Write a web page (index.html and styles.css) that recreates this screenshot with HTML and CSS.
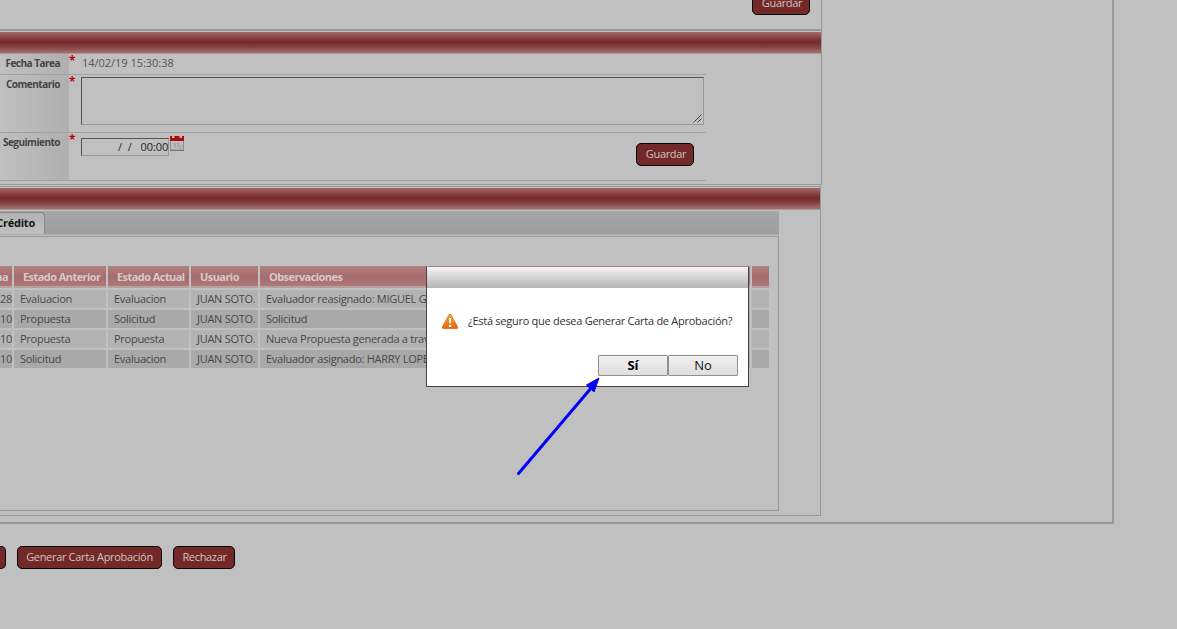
FILE: index.html
```html
<!DOCTYPE html>
<html lang="es">
<head>
<meta charset="utf-8">
<title>Generar Carta</title>
<link rel="stylesheet" href="styles.css">
</head>
<body>
<main class="frame">
  <section class="panel panel-top"><button class="btn btn-save">Guardar</button></section>
  <section class="panel panel-task">
    <div class="bar"></div>
    <div class="form">
      <div class="row row-date"><label>Fecha Tarea</label><i class="req">*</i><span class="value">14/02/19 15:30:38</span></div>
      <div class="row row-comment"><label>Comentario</label><i class="req">*</i>
        <div class="textarea"><svg width="9" height="9" viewBox="0 0 9 9"><path d="M0.5 8.5L8.5 .5M4.5 8.5L8.5 4.5" stroke="#444" fill="none"/></svg></div></div>
      <div class="row row-follow"><label>Seguimiento</label><i class="req">*</i>
        <div class="datebox"><span>/</span><span class="s2">/</span><span class="time">00:00</span></div>
        <svg class="cal" width="14" height="16" viewBox="0 0 14 16"><path d="M.5 5h13v10H.5z" fill="#bdbdbd" stroke="#909090"/><path d="M0 1h14v5H0z" fill="#a50f12"/><path d="M2 0h2.500v3H2zM9.500 0H12v3H9.500z" fill="#cbb49e"/><path d="M4 8.500L5 8v4.500M6.500 8.300H9L7.500 12.500" fill="none" stroke="#8a8a8a" stroke-width=".8"/><path d="M10 14v-3h3" fill="none" stroke="#999"/><path d="M0 15.500h14" stroke="#777"/></svg>
        <button class="btn btn-save">Guardar</button></div>
    </div>
  </section>
  <section class="panel panel-history">
    <div class="bar"></div>
    <div class="tabs"><div class="tab"><span>Crédito</span></div></div>
    <div class="content">
      <div class="grid head"><div>ha</div><div>Estado Anterior</div><div>Estado Actual</div><div>Usuario</div><div>Observaciones</div><div></div></div>
      <div class="grid"><div>28</div><div>Evaluacion</div><div>Evaluacion</div><div>JUAN SOTO.</div><div>Evaluador reasignado: MIGUEL G</div><div></div></div>
      <div class="grid alt"><div>10</div><div>Propuesta</div><div>Solicitud</div><div>JUAN SOTO.</div><div>Solicitud</div><div></div></div>
      <div class="grid"><div>10</div><div>Propuesta</div><div>Propuesta</div><div>JUAN SOTO.</div><div>Nueva Propuesta generada a trav</div><div></div></div>
      <div class="grid alt"><div>10</div><div>Solicitud</div><div>Evaluacion</div><div>JUAN SOTO.</div><div>Evaluador asignado: HARRY LOPE</div><div></div></div>
    </div>
  </section>
</main>
<footer class="actions"><button class="btn stub"></button><button class="btn generate">Generar Carta Aprobación</button><button class="btn reject">Rechazar</button></footer>
<div class="dialog">
  <div class="dialog-title"></div>
  <div class="message"><svg width="16" height="15" viewBox="0 0 16 15"><defs><linearGradient id="warn" x2="0" y2="1"><stop stop-color="#ffa63f"/><stop offset="1" stop-color="#e06810"/></linearGradient></defs><path d="M7 .8Q8 -.4 9 .8L15.600 13Q16 14.500 15 14.500H1Q0 14.500 .4 13Z" fill="url(#warn)" stroke="#d45f10" stroke-width=".7"/><path d="M7 4h2.200l-.4 5.500H7.400zM7 11h2.200v2H7z" fill="#fff"/></svg><span>¿Está seguro que desea Generar Carta de Aprobación?</span></div>
  <div class="choices"><button class="yes">Sí</button><button>No</button></div>
</div>
<svg class="arrow" width="90" height="104" viewBox="0 0 90 104"><path d="M3.500 98.500L77 12" stroke="#0000f4" stroke-width="3" stroke-linecap="round"/><path d="M84 3L71.500 10L79 17Z" fill="#0000f4" stroke="#0000f4"/></svg>
</body>
</html>
```
FILE: styles.css
```css
* { box-sizing: border-box; }
body { margin: 0; height: 629px; overflow: hidden; position: relative; background: #c0c0c0; color: #484848; font: 11px/16px "Open Sans", sans-serif; letter-spacing: -.27px; }
button { font: inherit; letter-spacing: inherit; padding: 0; margin: 0; white-space: nowrap; }
.frame { width: 1114px; height: 524px; border: solid #999; border-width: 0 2px 2px 0; }
.panel { width: 822px; border: solid #999; border-width: 0 1px 1px 0; }
.panel-top { display: flex; height: 31px; border-bottom-width: 2px; }
.panel-top .btn { margin: -8px 0 0 752px; }
.panel-task { height: 154px; padding-top: 1px; }
.bar { height: 22px; background: linear-gradient(#a36a6a, #8a4444 25%, #752828 48%, #834040 70%, #a27070); border-bottom: 1px solid #a99; }
.form { width: 706px; }
.row { display: flex; border-bottom: 1px solid #a2a2a2; }
.row label { width: 69px; flex: none; display: flex; justify-content: flex-end; padding: 1px 9px 0 0; font-weight: 700; font-size: 10px; letter-spacing: -.5px; color: #444; background: linear-gradient(90deg, #c0c0c0, #afafaf); white-space: nowrap; }
.req { width: 12px; flex: none; color: #c00008; font: 700 12px/14px "Open Sans", sans-serif; }
.row-date { height: 21px; }
.row-date .value { padding: 1px 0 0 1px; color: #555; letter-spacing: -.03px; }
.row-comment { height: 58px; }
.textarea { width: 623px; height: 48px; margin-top: 2px; border: 1px solid #999; border-top-color: #555; border-left-color: #555; display: flex; align-items: flex-end; justify-content: flex-end; padding: 1px; }
.row-follow { height: 48px; }
.datebox { width: 88px; height: 18px; margin-top: 5px; padding-left: 36px; line-height: 16px; border: 1px solid #999; border-top-color: #555; border-left-color: #555; display: flex; color: #222; white-space: nowrap; }
.datebox .s2 { margin-left: 6px; }
.datebox .time { margin-left: 9px; letter-spacing: -.1px; }
.cal { margin: 2px 0 0 1px; }
.row-follow .btn { margin: 10px 0 0 452px; }
.btn { display: block; flex: none; width: 58px; height: 23px; padding-bottom: 2px; background: #742929; border: 1px solid #000; border-radius: 5px; color: #d1c2c2; line-height: 19px; letter-spacing: -.33px; }
.btn-save { padding-left: 2px; }
.panel-history { width: 821px; height: 330px; margin-top: 1px; padding-top: 1px; border-top-width: 1px; }
.tabs { width: 779px; height: 24px; margin-top: 1px; padding-top: 1px; background: linear-gradient(#a5a5a5, #9e9e9e); border-bottom: 1px solid #aaa; }
.tab { width: 45px; height: 22px; display: flex; justify-content: flex-end; padding: 2px 9px 0 0; background: linear-gradient(#b2b2b2, #c0c0c0); border: solid #888; border-width: 1px 1px 0 0; border-radius: 0 4px 0 0; color: #161616; font-weight: 700; letter-spacing: -.22px; }
.content { width: 779px; height: 275px; margin-top: 1px; padding: 29px 9px 0 0; border: 1px solid #999; border-left: 0; overflow: hidden; }
.grid { display: grid; grid-template-columns: 12px 92px 81px 67px 490px 17px; gap: 2px; height: 18px; margin-bottom: 2px; }
.grid > div { background: #b3b3b3; white-space: nowrap; padding-left: 6px; line-height: 18px; }
.grid.alt > div { background: #a9a9a9; }
.grid > div:first-child { display: flex; justify-content: flex-end; padding: 0; }
.grid.head { height: 22px; font-weight: 700; letter-spacing: -.56px; color: #d8c9c9; }
.grid.head > div { background: linear-gradient(#b08080, #a66c6c 50%, #ae7a7a 92%, #b8a0a0 92%); line-height: 22px; padding-left: 9px; }
.grid.head > div:first-child { padding: 0 4px 0 0; }
.actions { display: flex; padding-top: 22px; }
.stub { width: 6px; border-left: 0; border-radius: 0 5px 5px 0; }
.generate { width: 145px; margin-left: 11px; }
.reject { width: 62px; margin-left: 11px; padding-left: 1px; }
.dialog { position: absolute; left: 426px; top: 267px; width: 323px; height: 120px; background: #fff; border: solid #444; border-width: 0 1px 1px; }
.dialog-title { height: 21px; background: linear-gradient(#f4f4f4, #d8d8d8 45%, #b5b5b5); }
.message { display: flex; align-items: center; height: 67px; padding-left: 15px; color: #333; white-space: nowrap; }
.message span { margin: -2px 0 0 10px; }
.choices { display: flex; justify-content: flex-end; padding-right: 10px; }
.choices button { width: 70px; height: 21px; background: linear-gradient(#f0f0f0, #dedede); border: 1px solid #909090; border-radius: 1px; font-size: 13px; line-height: 17px; letter-spacing: 0; color: #111; }
.choices .yes { font-weight: 700; color: #000; }
.arrow { position: absolute; left: 515px; top: 375px; }
```
